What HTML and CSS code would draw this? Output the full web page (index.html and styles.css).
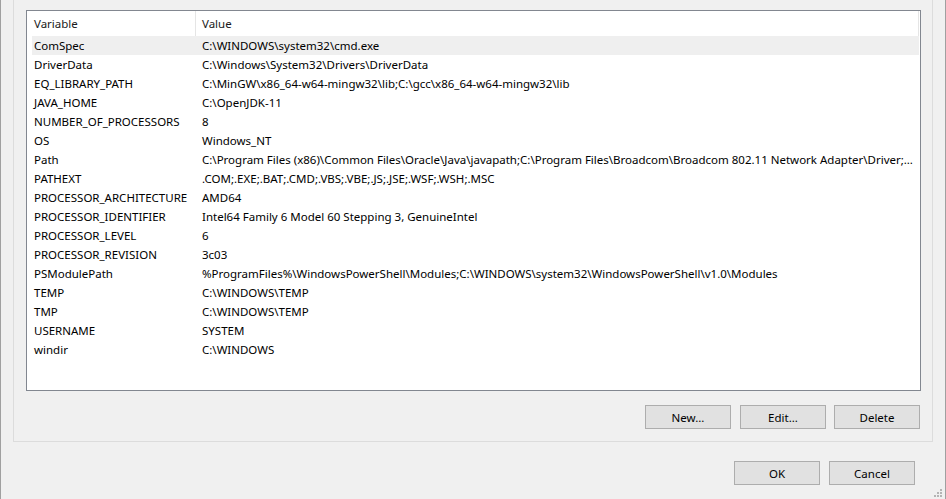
FILE: index.html
```html
<!DOCTYPE html>
<html>
<head>
<meta charset="utf-8">
<link rel="stylesheet" href="styles.css">
</head>
<body>
<div class="window">
  <div class="group">
    <div class="list">
      <div class="head">
        <div class="hcell hname">Variable</div>
        <div class="hcell hvalue">Value</div>
      </div>
      <div class="row sel"><div class="name">ComSpec</div><div class="value">C:\WINDOWS\system32\cmd.exe</div></div>
      <div class="row"><div class="name">DriverData</div><div class="value">C:\Windows\System32\Drivers\DriverData</div></div>
      <div class="row"><div class="name">EQ_LIBRARY_PATH</div><div class="value">C:\MinGW\x86_64-w64-mingw32\lib;C:\gcc\x86_64-w64-mingw32\lib</div></div>
      <div class="row"><div class="name">JAVA_HOME</div><div class="value">C:\OpenJDK-11</div></div>
      <div class="row"><div class="name">NUMBER_OF_PROCESSORS</div><div class="value">8</div></div>
      <div class="row"><div class="name">OS</div><div class="value">Windows_NT</div></div>
      <div class="row"><div class="name">Path</div><div class="value">C:\Program Files (x86)\Common Files\Oracle\Java\javapath;C:\Program Files\Broadcom\Broadcom 802.11 Network Adapter\Driver;C:\WINDOWS\system32;C:\WINDOWS</div></div>
      <div class="row"><div class="name">PATHEXT</div><div class="value">.COM;.EXE;.BAT;.CMD;.VBS;.VBE;.JS;.JSE;.WSF;.WSH;.MSC</div></div>
      <div class="row"><div class="name">PROCESSOR_ARCHITECTURE</div><div class="value">AMD64</div></div>
      <div class="row"><div class="name">PROCESSOR_IDENTIFIER</div><div class="value">Intel64 Family 6 Model 60 Stepping 3, GenuineIntel</div></div>
      <div class="row"><div class="name">PROCESSOR_LEVEL</div><div class="value">6</div></div>
      <div class="row"><div class="name">PROCESSOR_REVISION</div><div class="value">3c03</div></div>
      <div class="row"><div class="name">PSModulePath</div><div class="value">%ProgramFiles%\WindowsPowerShell\Modules;C:\WINDOWS\system32\WindowsPowerShell\v1.0\Modules</div></div>
      <div class="row"><div class="name">TEMP</div><div class="value">C:\WINDOWS\TEMP</div></div>
      <div class="row"><div class="name">TMP</div><div class="value">C:\WINDOWS\TEMP</div></div>
      <div class="row"><div class="name">USERNAME</div><div class="value">SYSTEM</div></div>
      <div class="row"><div class="name">windir</div><div class="value">C:\WINDOWS</div></div>
    </div>
    <div class="actions">
      <button class="btn btn-first">New...</button>
      <button class="btn">Edit...</button>
      <button class="btn">Delete</button>
    </div>
  </div>
  <div class="footer">
    <button class="btn">OK</button>
    <button class="btn">Cancel</button>
  </div>
  <svg class="grip" width="8" height="8" viewBox="0 0 8 8">
    <rect x="6" y="0" width="2" height="2" fill="#b4b4b4"/>
    <rect x="3" y="3" width="2" height="2" fill="#b4b4b4"/>
    <rect x="6" y="3" width="2" height="2" fill="#b4b4b4"/>
    <rect x="0" y="6" width="2" height="2" fill="#b4b4b4"/>
    <rect x="3" y="6" width="2" height="2" fill="#b4b4b4"/>
    <rect x="6" y="6" width="2" height="2" fill="#b4b4b4"/>
  </svg>
</div>
</body>
</html>
```
FILE: styles.css
```css
* { box-sizing: border-box; }
html, body { margin: 0; padding: 0; }
body {
  background: #f0f0f0;
  font-family: "Noto Sans", "Open Sans", "DejaVu Sans", sans-serif;
  font-size: 11.5px;
  color: #000;
}
.window {
  position: relative;
  width: 946px;
  height: 499px;
  border-left: 1px solid #a0a0a0;
  border-right: 1px solid #a0a0a0;
  overflow: hidden;
}
.group {
  margin-left: 12px;
  width: 920px;
  border-left: 1px solid #dcdcdc;
  border-right: 1px solid #dcdcdc;
  border-bottom: 1px solid #dcdcdc;
  padding: 10px 11px 12px 12px;
}
.list {
  height: 381px;
  border: 1px solid #828790;
  background: #fff;
  padding: 0 1px 0 5px;
  overflow: hidden;
}
.head {
  display: grid;
  grid-template-columns: 164px 1fr;
  height: 25px;
}
.hcell {
  line-height: 25px;
  border-right: 1px solid #e5e5e5;
  white-space: nowrap;
  color: #1a1a1a;
}
.hname { padding-left: 2px; }
.hvalue { padding-left: 6px; }
.row {
  display: grid;
  grid-template-columns: 164px 1fr;
  height: 19px;
  line-height: 19px;
  white-space: nowrap;
}
.row.sel { background: #efefef; }
.name { padding-left: 2px; overflow: hidden; }
.value {
  padding-left: 6px;
  padding-right: 6px;
  overflow: hidden;
  text-overflow: ellipsis;
}
.actions {
  display: flex;
  justify-content: flex-end;
  gap: 8px;
  margin-top: 14px;
  padding-right: 1px;
}
.btn {
  width: 86px;
  height: 24px;
  background: #e1e1e1;
  border: 1px solid #adadad;
  border-radius: 0;
  font-family: inherit;
  font-size: 11.5px;
  color: #000;
  padding: 0;
  margin: 0;
}
.btn-first { margin-right: 1px; }
.footer {
  display: flex;
  justify-content: flex-end;
  gap: 9px;
  margin-top: 19px;
  padding-right: 30px;
}
.grip {
  position: absolute;
  right: 3px;
  bottom: 2px;
}
```
